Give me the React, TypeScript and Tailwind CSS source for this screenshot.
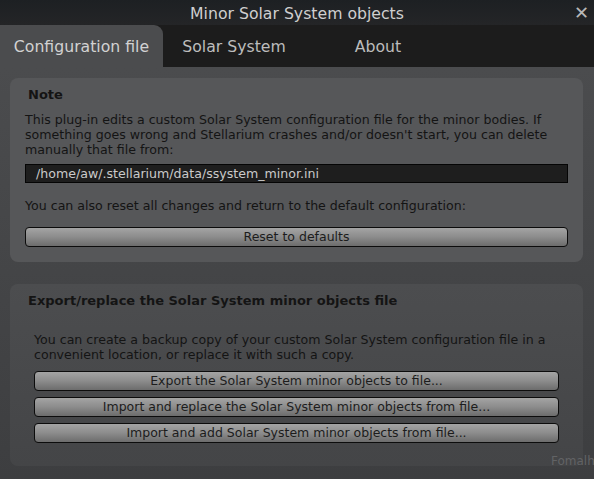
import React from "react";

const buttons = [
  "Export the Solar System minor objects to file...",
  "Import and replace the Solar System minor objects from file...",
  "Import and add Solar System minor objects from file...",
];

function GrayButton({ label }: { label: string }) {
  return (
    <button className="h-[20px] w-full rounded-[4px] border border-[#0c0c0c] bg-gradient-to-b from-[#a4a4a4] via-[#8c8c8c] to-[#6c6c6c] text-[12.5px] leading-[18px] text-[#1c1c1c]">
      {label}
    </button>
  );
}

export default function App() {
  return (
    <div className="relative flex h-[479px] w-[594px] flex-col overflow-hidden bg-[#3f4042] font-['DejaVu_Sans',sans-serif]">
      {/* title bar */}
      <div className="relative flex h-[25px] items-center justify-center bg-gradient-to-b from-[#1d2023] to-[#242527] pt-[2px]">
        <span className="text-[15.7px] text-[#cfcfcf]">Minor Solar System objects</span>
        <span className="absolute right-[5px] top-[4px] text-[18px] font-bold leading-[18px] text-[#b8b8b8]">✕</span>
      </div>

      {/* tabs */}
      <div className="flex h-[42px] items-stretch bg-[#1c1c1c] text-[15.7px]">
        <div className="flex w-[163px] items-center justify-center rounded-tr-[9px] bg-[#4b4c4e] pt-[2px] text-[#d2d2d2]">
          Configuration file
        </div>
        <div className="flex w-[142px] items-center justify-center pt-[2px] text-[#bdbdbd]">Solar System</div>
        <div className="flex w-[146px] items-center justify-center pt-[2px] text-[#bdbdbd]">About</div>
      </div>

      {/* content */}
      <div className="relative flex flex-1 flex-col gap-[22px] bg-gradient-to-b from-[#4b4c4e] to-[#3d3e40] px-[10px] pt-[11px]">
        <span className="pointer-events-none absolute left-[195px] top-[55px] text-[13px] text-[#5a5b5d]">Uranus</span>

        <div className="relative h-[184px] w-[573px] rounded-[8px] bg-[#565759] pl-[15px] pr-[6px] pt-[9px] text-[12.6px] leading-[15px] text-[#141414]">
          <div className="pl-[3px] text-[13px] font-bold">Note</div>
          <p className="mt-[10px]">
            This plug-in edits a custom Solar System configuration file for the minor bodies. If something goes wrong and Stellarium crashes and/or doesn't start, you can delete manually that file from:
          </p>
          <div className="mt-[7px] h-[19px] w-[543px] border border-[#050505] bg-[#1e1e1e] pl-[10px] leading-[17px] text-[#cacaca]">
            /home/aw/.stellarium/data/ssystem_minor.ini
          </div>
          <p className="mt-[15px]">You can also reset all changes and return to the default configuration:</p>
          <div className="mt-[14px] w-[543px]">
            <GrayButton label="Reset to defaults" />
          </div>
        </div>

        <div className="relative h-[182px] w-[573px] rounded-[8px] bg-gradient-to-b from-[#4c4d4f] to-[#444547] pl-[24px] pr-[8px] pt-[9px] text-[12.6px] leading-[15px] text-[#141414]">
          <div className="-ml-[6px] text-[13px] font-bold">Export/replace the Solar System minor objects file</div>
          <p className="mt-[24px]">
            You can create a backup copy of your custom Solar System configuration file in a convenient location, or replace it with such a copy.
          </p>
          <div className="mt-[9px] flex w-[525px] flex-col gap-[6px]">
            {buttons.map((b) => (
              <GrayButton key={b} label={b} />
            ))}
          </div>
        </div>
        <span className="pointer-events-none absolute left-[551px] top-[385px] text-[12px] text-[#626365]">Fomalh</span>
      </div>
    </div>
  );
}
